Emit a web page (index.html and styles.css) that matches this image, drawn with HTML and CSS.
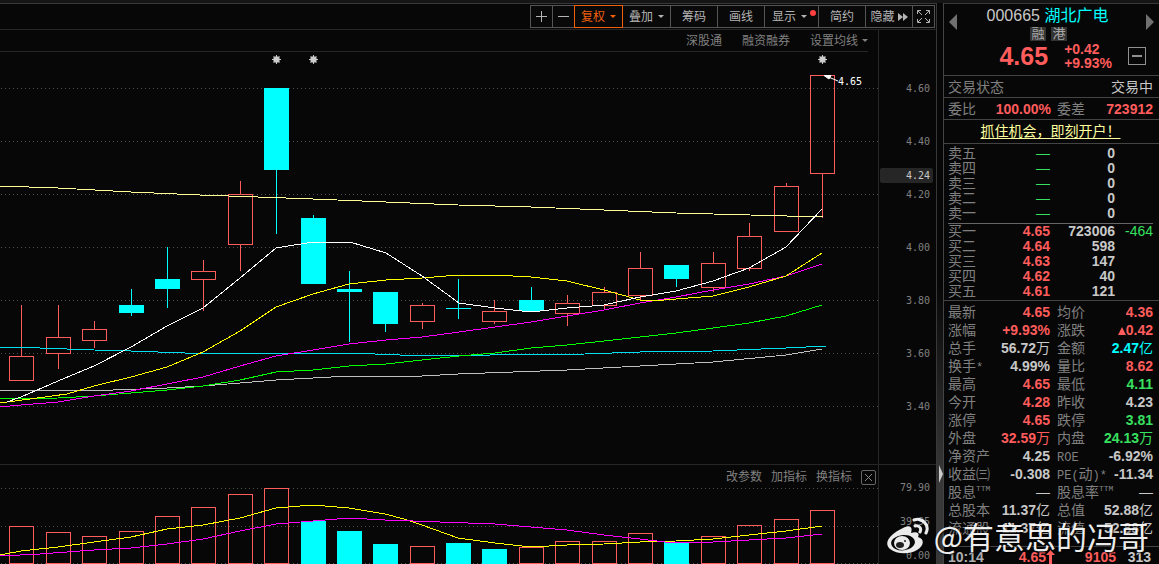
FILE: index.html
```html
<!DOCTYPE html>
<html lang="zh-CN">
<head>
<meta charset="utf-8">
<title>000665 湖北广电</title>
<link rel="stylesheet" href="styles.css">
</head>
<body>
<div class="app">
<main class="market">
  <nav class="toolbar">
    <button class="tool icon" aria-label="放大"><svg width="13" height="13"><path d="M6.500 1v11M1 6.500h11"/></svg></button>
    <button class="tool icon" aria-label="缩小"><svg width="13" height="13"><path d="M1 6.500h11"/></svg></button>
    <button class="tool drop active">复权<i class="caret"></i></button>
    <button class="tool drop">叠加<i class="caret"></i></button>
    <button class="tool">筹码</button>
    <button class="tool">画线</button>
    <button class="tool show">显示<i class="caret"></i><i class="dot"></i></button>
    <button class="tool">简约</button>
    <button class="tool hide">隐藏<svg class="solid" width="10" height="8"><path d="M0 0l5 4-5 4zM5 0l5 4-5 4z"/></svg></button>
    <button class="tool icon" aria-label="全屏"><svg width="15" height="15"><path d="M1.500 5V1.500H5M10 1.500h3.500V5M13.500 10v3.500H10M5 13.500H1.500V10M2 2l4 4M13 2l-4 4M13 13l-4-4M2 13l4-4"/></svg></button>
  </nav>
  <div class="charts">
    <div class="plots">
      <div class="links">
        <a href="#">深股通</a><a href="#">融资融券</a><a href="#">设置均线<i class="caret"></i></a>
      </div>
      <div class="price">
        <svg class="plot" viewBox="0 52 878 412" preserveAspectRatio="none">
          <path class="grid" d="M1 88.500H878M1 141.500H878M1 194.500H878M1 247.500H878M1 300.500H878M1 353.500H878M1 406.500H878"/>
          <g class="up">
            <path d="M9.500 356.500h24v24h-24zM21.500 305v51M46.500 337.500h24v16h-24zM58.500 305v32M58.500 354v15M82.500 329.500h24v11h-24zM94.500 321v8M94.500 341v7"/>
            <path d="M191.500 271.500h24v8h-24zM203.500 260v11M203.500 280v31M228.500 194.500h24v50h-24zM240.500 181v13M240.500 245v26"/>
            <path d="M410.500 305.500h24v16h-24zM422.500 303v2M422.500 322v7M482.500 311.500h24v10h-24zM494.500 300v11M494.500 322v2"/>
            <path d="M555.500 303.500h24v10h-24zM567.500 295v8M567.500 314v12M592.500 292.500h24v13h-24zM604.500 287v5M604.500 306v4"/>
            <path d="M628.500 268.500h24v27h-24zM640.500 252v16M640.500 296v4M701.500 263.500h24v24h-24zM713.500 252v11M713.500 288v4"/>
            <path d="M737.500 236.500h24v32h-24zM749.500 223v13M749.500 269v2M774.500 186.500h24v45h-24zM786.500 183v3M810.500 75.500h24v98h-24zM822.500 174v44"/>
          </g>
          <path class="down" d="M119 305h25v8h-25zM131 289h1v27h-1zM155 279h25v10h-25zM167 247h1v61h-1zM264 88h25v82h-25zM276 88h1v146h-1zM301 218h25v66h-25zM313 215h1v5h-1zM337 289h25v3h-25zM349 271h1v71h-1zM373 292h25v32h-25zM385 320h1v12h-1zM446 308h25v1h-25zM458 279h1v40h-1zM519 300h25v11h-25zM531 287h1v25h-1zM664 265h25v14h-25zM676 278h1v9h-1z"/>
          <g class="avg">
            <path class="pale" d="M0 186L58 188L131 192L200 195L258 197L313 199L386 202L458 205L531 207L604 210L676 213L750 215L823 217"/>
            <path class="aqua" d="M0 347L40 348L94 350L131 351L185 353L349 353L400 355L490 355L585 354L640 352L713 351L786 348L826 346"/>
            <path class="gray" d="M0 390L113 390L167 388L203 386L240 383L276 380L313 378L349 376L422 376L458 374L513 372L567 370L640 366L713 362L786 355L822 349"/>
            <path class="green" d="M0 399L58 398L94 396L131 393L167 390L203 386L240 380L276 372L313 370L349 366L386 364L422 360L459 356L495 353L531 348L567 345L604 341L640 337L676 333L713 328L749 323L786 316L822 305"/>
            <path class="pink" d="M0 407L21 405L58 402L94 396L131 391L167 384L203 377L240 366L276 356L313 350L349 344L386 340L422 337L459 332L495 327L531 322L567 316L604 310L640 303L676 297L713 290L749 284L786 276L822 264"/>
            <path class="yellow" d="M0 403L67 394L94 386L131 377L167 367L203 352L240 331L276 307L313 294L349 284L386 280L422 278L458 275L495 275L531 277L567 281L604 290L640 300L652 301L676 299L713 296L749 287L786 276L822 253"/>
            <path class="white" d="M7 402L21 397L58 381L94 366L131 347L167 326L203 308L240 278L276 248L313 242L350 242L386 253L422 276L459 303L495 308L531 312L567 308L604 305L640 297L676 291L713 281L749 268L786 247L822 209"/>
          </g>
          <path class="arrow" d="M824 75.500L831 75.500L829 79Z"/><path class="arrow" d="M826 76L838 81"/>
          <g class="marks">
            <path id="sun" d="M276.500 55v9M272 59.500h9M273.500 56.500l6 6M279.500 56.500l-6 6M274 57h5v5h-5z"/>
            <use href="#sun" x="37"/><use href="#sun" x="546"/>
          </g>
          <text class="tag" x="838" y="85">4.65</text>
        </svg>
      </div>
      <div class="volume">
        <div class="links indicator"><a href="#">改参数</a><a href="#">加指标</a><a href="#">换指标</a><button class="close" aria-label="关闭"><svg width="9" height="9"><path d="M1 1l7 7M8 1L1 8"/></svg></button></div>
        <svg class="plot" viewBox="0 465 878 99" preserveAspectRatio="none">
          <path class="grid" d="M1 488.500H878M1 526.500H878M1 563.500H878"/>
          <path class="up" d="M9.500 526.500h24v37h-24zM46.500 532.500h24v31h-24zM82.500 536.500h24v27h-24zM119.500 531.500h24v32h-24zM155.500 516.500h24v47h-24zM191.500 507.500h24v56h-24zM228.500 494.500h24v69h-24zM264.500 488.500h24v75h-24zM410.500 546.500h24v17h-24zM519.500 547.500h24v16h-24zM555.500 541.500h24v22h-24zM592.500 541.500h24v22h-24zM628.500 533.500h24v30h-24zM701.500 536.500h24v27h-24zM737.500 525.500h24v38h-24zM774.500 519.500h24v44h-24zM810.500 510.500h24v53h-24z"/>
          <path class="down" d="M301 521h25v43h-25zM337 531h25v33h-25zM373 544h25v20h-25zM446 543h25v21h-25zM482 549h25v15h-25zM664 542h25v22h-25z"/>
          <g class="avg">
            <path class="yellow" d="M0 555L21 551L58 547L94 542L131 537L167 529L203 525L240 518L276 508L313 505L349 508L385 514L404 519L422 525L458 538L495 543L531 547L567 545L604 544L640 542L676 541L713 539L749 535L786 531L822 526"/>
            <path class="pink" d="M0 556L40 554L94 550L131 548L167 544L203 539L240 531L276 524L313 521L349 518L385 520L440 522L495 524L567 530L604 535L640 539L665 542L713 542L749 540L786 538L822 534"/>
          </g>
        </svg>
      </div>
    </div>
    <div class="axis">
      <div class="scale"><span>4.60</span><span>4.40</span><span>4.20</span><span>4.00</span><span>3.80</span><span>3.60</span><span>3.40</span><b class="cursor">4.24</b></div>
      <div class="scale vol"><span>79.90</span><span>39.95</span><span>0.00</span></div>
    </div>
  </div>
</main>
<div class="splitter"><i></i></div>
<aside class="quote">
  <header class="head">
    <button class="prev" aria-label="上一个"></button>
    <div class="title">
      <h1>000665 <em>湖北广电</em></h1>
      <div class="badges"><span>融</span><span>港</span></div>
    </div>
    <button class="next" aria-label="下一个"></button>
    <div class="last"><strong>4.65</strong><div>+0.42<br>+9.93%</div><button class="minus" aria-label="收起"></button></div>
  </header>
  <div class="line"><span>交易状态</span><span class="light">交易中</span></div>
  <div class="line pair"><span>委比</span><b class="r">100.00%</b><span>委差</span><b class="r">723912</b></div>
  <div class="promo"><a href="#">抓住机会，即刻开户！</a></div>
  <table class="book">
    <tbody>
      <tr><th>卖五</th><td class="g thin">—</td><td>0</td><td></td></tr>
      <tr><th>卖四</th><td class="g thin">—</td><td>0</td><td></td></tr>
      <tr><th>卖三</th><td class="g thin">—</td><td>0</td><td></td></tr>
      <tr><th>卖二</th><td class="g thin">—</td><td>0</td><td></td></tr>
      <tr><th>卖一</th><td class="g thin">—</td><td>0</td><td></td></tr>
    </tbody>
  </table>
  <table class="book buy">
    <tbody>
      <tr><th>买一</th><td class="r">4.65</td><td>723006</td><td class="g">-464</td></tr>
      <tr><th>买二</th><td class="r">4.64</td><td>598</td><td></td></tr>
      <tr><th>买三</th><td class="r">4.63</td><td>147</td><td></td></tr>
      <tr><th>买四</th><td class="r">4.62</td><td>40</td><td></td></tr>
      <tr><th>买五</th><td class="r">4.61</td><td>121</td><td></td></tr>
    </tbody>
  </table>
  <div class="detail">
  <table class="stats">
    <tbody>
      <tr><th>最新</th><td class="r">4.65</td><th>均价</th><td class="r">4.36</td></tr>
      <tr><th>涨幅</th><td class="r">+9.93%</td><th>涨跌</th><td class="r"><i class="rise"></i>0.42</td></tr>
      <tr><th>总手</th><td>56.72<u>万</u></td><th>金额</th><td class="c">2.47<u>亿</u></td></tr>
      <tr><th>换手<s>*</s></th><td>4.99%</td><th>量比</th><td class="r">8.62</td></tr>
      <tr><th>最高</th><td class="r">4.65</td><th>最低</th><td class="g">4.11</td></tr>
      <tr><th>今开</th><td class="r">4.28</td><th>昨收</th><td>4.23</td></tr>
      <tr><th>涨停</th><td class="r">4.65</td><th>跌停</th><td class="g">3.81</td></tr>
      <tr><th>外盘</th><td class="r">32.59<u>万</u></td><th>内盘</th><td class="g">24.13<u>万</u></td></tr>
      <tr><th>净资产</th><td>4.25</td><th><s>ROE</s></th><td>-6.92%</td></tr>
      <tr><th>收益㈢</th><td>-0.308</td><th><s>PE(</s>动<s>)*</s></th><td>-11.34</td></tr>
      <tr><th>股息<sup>TTM</sup></th><td class="thin">—</td><th>股息率<sup>TTM</sup></th><td class="thin">—</td></tr>
      <tr><th>总股本</th><td>11.37<u>亿</u></td><th>总值</th><td>52.88<u>亿</u></td></tr>
      <tr><th>流通股</th><td>11.37<u>亿</u></td><th>流值</th><td>52.88<u>亿</u></td></tr>
    </tbody>
  </table>
  </div>
  <div class="tick"><time>10:14</time><b class="r">4.65<svg width="9" height="15"><path d="M4.500 0L9 5H6V15H3V5H0Z"/></svg></b><b class="r">9105</b><b>313</b></div>
</aside>
</div>
<div class="watermark">
  <svg width="44" height="38" viewBox="0 0 44 38">
    <path fill="#fff" fill-rule="evenodd" d="M17 11C24 7 27 10 25 16C31 14 34 16 32 20C39 22 38 29 31 33C23 38 10 37 4 32C-3 26 4 17 17 11ZM17 18C8 19 3 24 6 29C9 34 18 35 25 31C33 26 28 17 17 18Z"/>
    <ellipse cx="16" cy="26" rx="8" ry="7" fill="#fff"/>
    <ellipse cx="14" cy="28" rx="4" ry="3" fill="#222"/><circle cx="19" cy="24" r="1" fill="#222"/>
    <path fill="none" stroke="#fff" stroke-width="3" stroke-linecap="round" d="M28 3C36 0 44 8 40 16M29 9C33 8 36 11 34 15"/>
  </svg>
  <span>@有意思的冯哥</span>
</div>
</body>
</html>
```
FILE: styles.css
```css
* { box-sizing: border-box; }
body {
  margin: 0;
  background: #070707;
  color: #c8c8c8;
  font: 12px/16px "Liberation Sans", "Noto Sans CJK SC", sans-serif;
  overflow: hidden;
}
button { margin: 0; padding: 0; border: 0; background: none; color: inherit; font: inherit; }
a { color: inherit; text-decoration: none; }
i, em { font-style: normal; }
.app { display: flex; height: 100vh; border-top: 3px solid #151515; box-shadow: inset 0 1px #383838; }
.market { flex: 1; min-width: 0; display: flex; flex-direction: column; }

.toolbar { display: flex; justify-content: flex-end; padding: 2px 2px 1px 0; height: 26px; }
.tool {
  display: flex; align-items: center; justify-content: center; gap: 5px;
  position: relative; width: 48px; height: 23px; margin-right: -1px;
  border: 1px solid #555; color: #b4b4b4; background: #090909;
}
.tool svg { fill: none; stroke: #b4b4b4; }
.tool svg.solid { fill: #b4b4b4; stroke: none; }
.icon { width: 23px; }
.drop { width: 49px; }
.active { z-index: 1; border-color: #f2600c; color: #f2600c; }
.show { width: 55px; justify-content: flex-start; padding-left: 7px; }
.hide { width: 48px; gap: 3px; }
.caret { width: 0; border: 3px solid transparent; border-top-color: currentColor; border-bottom: 0; }
.dot { position: absolute; right: 2px; top: 4px; width: 6px; height: 6px; border-radius: 50%; background: #ff4040; }

.charts { flex: 1; min-height: 0; display: flex; border-top: 1px solid #262626; }
.plots { flex: 1; min-width: 0; display: flex; flex-direction: column; }
.links { display: flex; justify-content: flex-end; align-items: center; gap: 20px; height: 22px; margin-right: 10px; border-bottom: 1px solid #262626; color: #808080; }
.links .caret { display: inline-block; margin-left: 4px; vertical-align: 3px; }
.price { flex: 412; min-height: 0; border-bottom: 1px solid #262626; }
.volume { flex: 99; min-height: 0; position: relative; }
.plot { display: block; width: 100%; height: 100%; }
.indicator { position: absolute; top: 0; right: 2px; margin: 0; border: 0; gap: 9px; height: 24px; }
.close { display: grid; place-items: center; width: 15px; height: 15px; border: 1px solid #666; border-radius: 2px; }
.close svg { stroke: #888; }
.grid { stroke: #505050; stroke-dasharray: 1 3; shape-rendering: crispEdges; }
.up { fill: none; stroke: #ff5c5c; shape-rendering: crispEdges; }
.down { fill: #0ff; shape-rendering: crispEdges; }
.avg { fill: none; shape-rendering: crispEdges; }
.pale { stroke: #ffff98; }
.aqua { stroke: #00e0f0; }
.gray { stroke: #c0c0c0; }
.green { stroke: #0f0; }
.pink { stroke: #f0f; }
.yellow { stroke: #ff0; }
.white, .arrow { stroke: #fff; fill: none; }
.arrow { fill: #fff; }
.marks { stroke: #ccc; fill: #ccc; }
.tag { fill: #fff; font: 10px "DejaVu Sans Mono", monospace; }

.axis { width: 58px; border-left: 1px solid #262626; display: grid; grid-template-rows: minmax(0, 435fr) minmax(0, 99fr); color: #808080; font: 10px/53px "DejaVu Sans Mono", monospace; text-align: right; }
.scale { position: relative; padding: 32px 6px 0 0; border-bottom: 1px solid #262626; display: flex; flex-direction: column; }
.scale span { flex: none; height: 53px; }
.cursor { position: absolute; left: 1px; right: 3px; top: 138px; padding-right: 3px; border-radius: 2px; background: #262626; color: #c8c8c8; font-weight: 400; line-height: 15px; }
.vol { padding-top: 14px; border: 0; gap: 16px; line-height: 18px; }
.vol span { height: 18px; }

.splitter { flex: none; width: 7px; display: flex; align-items: center; justify-content: flex-end; border-left: 1px solid #383838; background: linear-gradient(#070707 50%, #383838 85%); padding-top: 380px; }
.splitter i { border: 9px solid transparent; border-left: 4px solid #ccc; border-right: 0; }

.quote { flex: none; width: 216px; border-left: 1px solid #444; font-size: 14px; line-height: 18px; color: #808080; }
.r { color: #ff5c5c; }
.quote .g { color: #38e060; }
.quote .c { color: #0ff; }
.light { color: #c8c8c8; }
.head { display: grid; grid-template-columns: 22px 1fr 22px; height: 73px; padding: 2px 5px 0; border-bottom: 1px solid #444; }
.title { text-align: center; padding-right: 8px; }
h1 { margin: 0; color: #c8c8c8; font-size: 16px; font-weight: 400; line-height: 22px; }
h1 em { color: #0ff; }
.prev, .next { align-self: start; width: 0; margin-top: 9px; border: 8px solid transparent; }
.prev { border-right-color: #707070; border-left: 0; }
.next { justify-self: end; border-left-color: #707070; border-right: 0; }
.badges { display: flex; justify-content: center; gap: 5px; padding-left: 2px; }
.badges span { width: 16px; background: #333; color: #a8a8a8; font-size: 13px; line-height: 14px; }
.last { grid-column: 1 / -1; display: flex; align-items: center; justify-content: flex-end; gap: 16px; color: #ff5c5c; padding-right: 8px; height: 30px; margin-top: -4px; }
.last strong { font-size: 25px; line-height: 28px; }
.last div { font-weight: 700; line-height: 14px; }
.minus { width: 18px; height: 18px; background: linear-gradient(#909090, #909090) center / 10px 2px no-repeat; border: 1px solid #909090; }
.line { display: flex; justify-content: space-between; height: 22px; padding: 0 6px 0 4px; border-bottom: 1px solid #444; line-height: 23px; }
.pair { display: grid; grid-template-columns: 28px 75px 34px 1fr; }
.pair b { text-align: right; }
.pair span:nth-child(3) { padding-left: 6px; }
.promo { height: 24px; border-bottom: 1px solid #444; padding-right: 2px; text-align: center; color: #ffffa0; line-height: 23px; }
.promo a { text-decoration: underline; text-underline-offset: 2px; }
table { border-collapse: collapse; table-layout: fixed; }
th { padding: 0; font-weight: 400; text-align: left; white-space: nowrap; }
td { padding: 0; font-weight: 700; text-align: right; color: #c8c8c8; white-space: nowrap; }
td.r { color: #ff5c5c; }
.thin { font-weight: 400; }
.book { width: 205px; margin: 2px 0 0 4px; line-height: 15px; }
.book th { width: 32px; }
.book td:nth-child(2) { width: 70px; }
.book td:nth-child(3) { width: 65px; }
.book td:nth-child(4) { width: 38px; font-weight: 400; }
.buy { margin-top: 2px; border-top: 1px solid #666; }
.detail { padding: 2px 0 9px 4px; margin-top: 1px; border-top: 1px solid #444; }
.stats { width: 205px; line-height: 18px; }
.stats th:nth-child(1) { width: 44px; }
.stats td:nth-child(2) { width: 58px; }
.stats th:nth-child(3) { width: 51px; padding-left: 7px; }
.stats tr { height: 18px; }
u, s { text-decoration: none; font-weight: 400; }
s { font: 12px "Liberation Mono", monospace; }
sup { font: 8px/8px "Liberation Mono", monospace; vertical-align: 6px; }
.rise { display: inline-block; border: 4px solid transparent; border-bottom: 8px solid #ff5c5c; border-top: 0; }
.tick { display: grid; grid-template-columns: 40px 67px 61px 35px; height: 22px; padding-left: 4px; border-top: 1px solid #444; line-height: 21px; color: #c8c8c8; text-align: right; }
.tick time { text-align: left; font-weight: 700; color: #b0b0b0; }
.tick .r { color: #ff5c5c; }
.tick svg { fill: #ff5c5c; vertical-align: -3px; }

.watermark { position: absolute; right: 10px; bottom: 9px; display: flex; align-items: center; gap: 4px; color: #fff; font: 31px/38px "Noto Sans CJK SC", sans-serif; text-shadow: 1px 1px 2px #000; opacity: .92; white-space: nowrap; }
```
